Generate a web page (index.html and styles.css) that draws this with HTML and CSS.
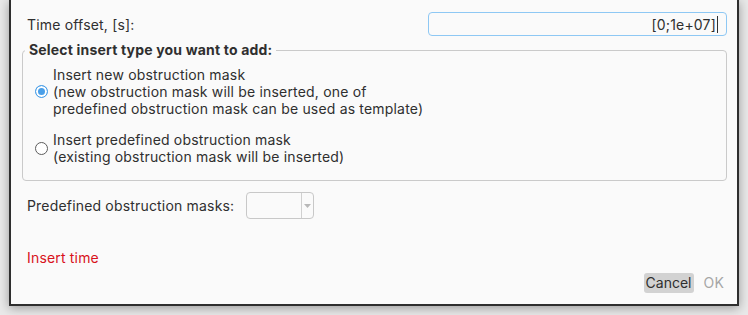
FILE: index.html
```html
<!DOCTYPE html>
<html>
<head>
<meta charset="utf-8">
<link rel="stylesheet" href="styles.css">
</head>
<body>
<div class="window">
  <div class="row top-row">
    <span class="label">Time offset, [s]:</span>
    <div class="input"><span class="value">[0;1e+07]</span><span class="caret"></span></div>
  </div>
  <fieldset class="group">
    <legend>Select insert type you want to add:</legend>
    <div class="option first">
      <span class="radio checked"></span>
      <div class="opt-text">Insert new obstruction mask<br>(new obstruction mask will be inserted, one of<br>predefined obstruction mask can be used as template)</div>
    </div>
    <div class="option second">
      <span class="radio"></span>
      <div class="opt-text">Insert predefined obstruction mask<br>(existing obstruction mask will be inserted)</div>
    </div>
  </fieldset>
  <div class="row combo-row">
    <span class="label">Predefined obstruction masks:</span>
    <div class="combo"><span class="combo-field"></span><span class="combo-arrow"><svg width="7" height="4" viewBox="0 0 7 4"><path d="M0 0H7L3.5 4Z" fill="#b8b8b8"/></svg></span></div>
  </div>
  <div class="status">Insert time</div>
  <div class="buttons">
    <span class="btn cancel">Cancel</span>
    <span class="btn ok">OK</span>
  </div>
</div>
</body>
</html>
```
FILE: styles.css
```css
html, body {
  margin: 0;
  padding: 0;
}
body {
  width: 748px;
  height: 315px;
  background: #e9e9e9;
  overflow: hidden;
  font-family: Inter, "Noto Sans", sans-serif;
  font-size: 14px;
  line-height: 17px;
  letter-spacing: 0.18px;
  color: #2f2f2f;
}
.window {
  margin-left: 9px;
  width: 705px;
  height: 304px;
  background: #fafafa;
  border: 2px solid #2e2e2e;
  border-top: none;
  box-shadow: 0 2px 10px rgba(0, 0, 0, 0.35);
  padding: 0 10px 0 11px;
  box-sizing: content-box;
  display: flex;
  flex-direction: column;
}
.row {
  display: flex;
  align-items: center;
}
.label {
  margin-left: 5px;
}
.top-row {
  margin-top: 12px;
  justify-content: space-between;
  height: 24px;
}
.input {
  width: 289px;
  height: 22px;
  border: 1px solid #8ec8f4;
  border-radius: 4px;
  background: #fafafa;
  display: flex;
  align-items: center;
  justify-content: flex-end;
  padding-right: 8px;
  box-sizing: content-box;
}
.value {
  color: #2f2f2f;
}
.caret {
  width: 1px;
  height: 17px;
  background: #2f2f2f;
  margin-left: 1px;
}
.group {
  margin: 5px 0 0 0;
  padding: 7px 0 15px 0;
  border: 1px solid #cacaca;
  border-radius: 4px;
  min-width: 0;
}
.group legend {
  font-weight: bold;
  line-height: 18px;
  padding: 0 4px;
  margin-left: 2px;
}
.option {
  display: flex;
  align-items: center;
  padding-left: 12px;
}
.option.second {
  margin-top: 14px;
}
.radio {
  width: 11px;
  height: 11px;
  border-radius: 50%;
  border: 1px solid #5c5c5c;
  background: #fff;
  margin-right: 5px;
  flex: none;
  box-sizing: content-box;
}
.radio.checked {
  border-color: #4a9fe8;
  background: #4a9fe8;
  box-shadow: inset 0 0 0 2px #ffffff;
}
.combo-row {
  margin-top: 11px;
  height: 27px;
}
.combo {
  margin-left: 12px;
  width: 66px;
  height: 25px;
  border: 1px solid #c8c8c8;
  border-radius: 4px;
  display: flex;
  background: #fafafa;
}
.combo-field {
  flex: 1;
  border-right: 1px solid #d0d0d0;
}
.combo-arrow {
  width: 11px;
  display: flex;
  align-items: center;
  justify-content: center;
}
.status {
  margin: 30px 0 0 5px;
  color: #d8121c;
}
.buttons {
  margin-top: 7px;
  margin-right: -1px;
  display: flex;
  justify-content: flex-end;
  align-items: center;
  gap: 6px;
}
.btn {
  height: 20px;
  line-height: 20px;
  border-radius: 3px;
}
.cancel {
  background: #d2d2d2;
  color: #2f2f2f;
  padding: 0 2px;
  letter-spacing: 0;
}
.ok {
  color: #a6a6a6;
  padding: 0 4px;
}
```
